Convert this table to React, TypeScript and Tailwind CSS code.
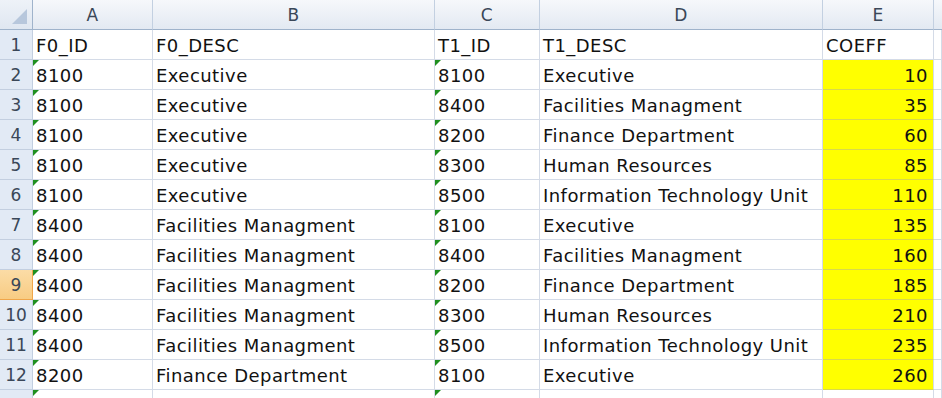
import React from "react";

const COLS = [
  { key: "A", w: "w-[120px]" },
  { key: "B", w: "w-[282px]" },
  { key: "C", w: "w-[105px]" },
  { key: "D", w: "w-[283px]" },
  { key: "E", w: "w-[111px]" },
];

const DEPTS: [string, string][] = [
  ["8100", "Executive"],
  ["8400", "Facilities Managment"],
  ["8200", "Finance Department"],
  ["8300", "Human Resources"],
  ["8500", "Information Technology Unit"],
];

// F0 rows 2-12: each source dept paired with every target dept
const ROWS: { f0: [string, string]; t1: [string, string]; coeff: number }[] = [];
for (let i = 0; i < 11; i++) {
  ROWS.push({ f0: DEPTS[Math.floor(i / 5)], t1: DEPTS[i % 5], coeff: 10 + i * 25 });
}

const font = "font-['DejaVu_Sans',sans-serif] text-[18px] tracking-[0.45px] leading-[17px]";
const cell = "box-border flex h-[30px] shrink-0 items-end border-r border-b border-[#d4dbe7] pb-[5px] pl-[3px]";

function TextFlag() {
  return (
    <span className="absolute left-0 top-0 h-0 w-0 border-t-[6px] border-r-[6px] border-t-[#1f8f1f] border-r-transparent" />
  );
}

function RowHead({ n, active }: { n?: number; active?: boolean }) {
  return (
    <div
      className={
        "box-border flex h-[30px] w-[33px] shrink-0 items-end justify-center border-b border-r pb-[5px] text-[17px] tracking-normal text-[#3a4758] " +
        (active
          ? "border-[#f0a64a] bg-gradient-to-b from-[#fbdca6] to-[#f8cc83]"
          : "border-[#c3cfe0] bg-[#e2eaf5]")
      }
    >
      {n}
    </div>
  );
}

export default function App() {
  return (
    <div className={"h-[398px] w-[942px] overflow-hidden bg-white text-[#111111] " + font}>
      {/* column headers */}
      <div className="flex h-[30px]">
        <div className="relative box-border h-[30px] w-[33px] shrink-0 border-b border-r border-[#9fb3cb] bg-gradient-to-b from-[#eef2f8] to-[#dfe7f1]">
          <span className="absolute bottom-[5px] right-[5px] h-0 w-0 border-b-[15px] border-l-[15px] border-b-[#b7c7dc] border-l-transparent" />
        </div>
        {COLS.map((c) => (
          <div
            key={c.key}
            className={
              "box-border flex h-[30px] shrink-0 items-end justify-center border-b border-r border-b-[#9fb3cb] border-r-[#c3d0e1] bg-gradient-to-b from-[#f6f8fb] to-[#e3e9f2] pb-[5px] text-[17px] text-[#3a4758] " +
              c.w
            }
          >
            {c.key}
          </div>
        ))}
        <div className="box-border h-[30px] flex-1 border-b border-[#9fb3cb] bg-gradient-to-b from-[#f6f8fb] to-[#e3e9f2]" />
      </div>

      {/* header row 1 */}
      <div className="flex">
        <RowHead n={1} />
        <div className={cell + " w-[120px]"}>F0_ID</div>
        <div className={cell + " w-[282px]"}>F0_DESC</div>
        <div className={cell + " w-[105px]"}>T1_ID</div>
        <div className={cell + " w-[283px]"}>T1_DESC</div>
        <div className={cell + " w-[111px]"}>COEFF</div>
        <div className={cell + " flex-1 shrink"} />
      </div>

      {ROWS.map((r, i) => (
        <div key={i} className="flex">
          <RowHead n={i + 2} active={i + 2 === 9} />
          <div className={cell + " relative w-[120px]"}>
            <TextFlag />
            {r.f0[0]}
          </div>
          <div className={cell + " w-[282px]"}>{r.f0[1]}</div>
          <div className={cell + " relative w-[105px]"}>
            <TextFlag />
            {r.t1[0]}
          </div>
          <div className={cell + " w-[283px]"}>{r.t1[1]}</div>
          <div className={cell + " w-[111px] justify-end border-b-[#d9d94a] bg-[#ffff00] pr-[5px]"}>{r.coeff}</div>
          <div className={cell + " flex-1 shrink"} />
        </div>
      ))}

      {/* partial row 13, cut off by the window edge */}
      <div className="flex">
        <RowHead />
        <div className={cell + " relative w-[120px]"}>
          <TextFlag />
        </div>
        <div className={cell + " w-[282px]"} />
        <div className={cell + " relative w-[105px]"}>
          <TextFlag />
        </div>
        <div className={cell + " w-[283px]"} />
        <div className={cell + " w-[111px]"} />
        <div className={cell + " flex-1 shrink"} />
      </div>
    </div>
  );
}
